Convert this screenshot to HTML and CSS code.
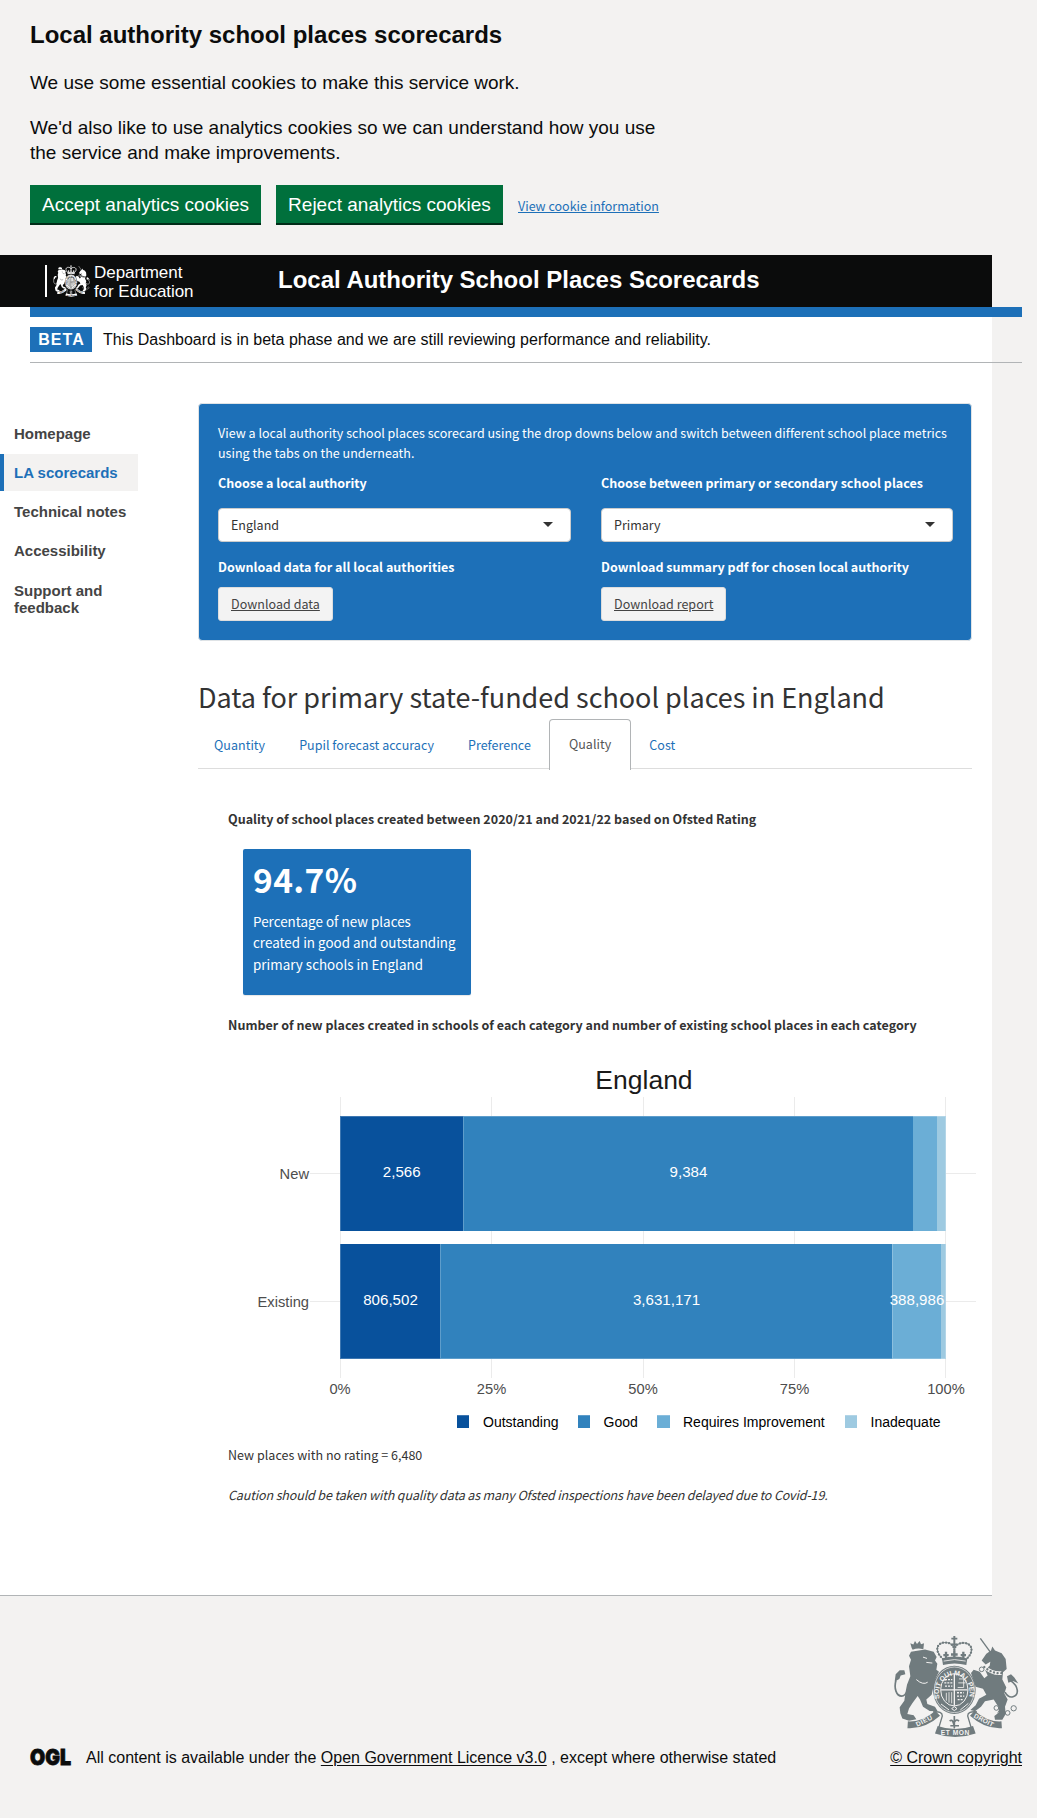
FILE: index.html
```html
<!DOCTYPE html>
<html lang="en">
<head>
<meta charset="utf-8">
<title>Local authority school places scorecards</title>
<link rel="stylesheet" href="styles.css">
</head>
<body>
<svg class="defs" aria-hidden="true">
  <defs>
    <path id="garter-arc" d="M210 238A46 55 0 1 1 298 238"/>
    <symbol id="crest" viewBox="70 45 378 312">
      <!-- lion -->
      <g fill="currentColor">
        <path d="M126 84l-4-14 9 4 5-11 6 9 8-9 4 10 9-3-2 18q-18-5-32 2z"/>
        <path d="M124 96L166 89 192 96 201 112 196 122 203 132 200 150 208 156 198 176 210 200 200 214 190 208 186 226 170 240 173 254 196 262 204 276 180 275 160 262 151 240 144 230 128 252 118 268 113 284 132 288 140 300 118 305 98 298 92 282 90 264 104 244 108 216 112 196 122 170 118 140 124 120 118 108z"/>
        <path d="M75 186l3-22 12-12h14l3 12-14 4-4 10z"/>
      </g>
      <path d="M79 182C72 206 80 230 96 230S112 210 122 198" fill="none" stroke="currentColor" stroke-width="5"/>
      <path d="M160 112l12 4M170 128l18 2M140 180q20 18 34 8" class="cut" stroke-width="3" fill="none"/>
      <!-- unicorn -->
      <path d="M332 55l30 42" stroke="currentColor" stroke-width="4"/>
      <path fill="currentColor" d="M336 122L350 102 364 92 368 80 376 92 396 100 408 118 411 148 400 158 398 180 410 204 404 222 414 240 406 262 408 284 398 302 376 302 374 290 388 280 386 262 372 240 346 246 334 262 316 276 302 272 318 258 328 238 350 226 340 208 318 202 312 184 304 160 312 150 330 156 344 176 354 168 346 150 360 138 362 126 348 134z"/>
      <path fill="currentColor" d="M416 190l-4-20 12-6 10 10 12 18-16-8z"/>
      <path d="M424 184C446 200 450 226 430 232Q416 236 406 218" fill="none" stroke="currentColor" stroke-width="5"/>
      <path d="M344 142q26 22 52 18" fill="none" class="cut" stroke-width="11"/>
      <path d="M344 142q26 22 52 18" fill="none" stroke="currentColor" stroke-width="7" stroke-linecap="round" stroke-dasharray=".1 11"/>
      <g class="links" stroke="currentColor" stroke-width="3">
        <circle cx="336" cy="149" r="7"/><circle cx="328" cy="188" r="7"/><circle cx="399" cy="201" r="6"/>
        <circle cx="380" cy="266" r="7"/><circle cx="392" cy="281" r="7"/><circle cx="414" cy="281" r="7"/><circle cx="432" cy="267" r="8"/>
      </g>
      <!-- crown -->
      <g fill="none" stroke="currentColor">
        <path d="M220 118C190 90 204 66 228 68 244 68 252 78 254 90 257 76 266 68 284 69 306 71 316 94 290 118" stroke-width="3"/>
        <path d="M220 118C190 90 204 66 228 68 244 68 252 78 254 90 257 76 266 68 284 69 306 71 316 94 290 118" stroke-width="7" stroke-linecap="round" stroke-dasharray=".1 9"/>
        <path d="M254 48v34M245 56h18M246 74h16" stroke-width="6"/>
        <path d="M229 96v24M221 106h16M254 92v26M244 104h20M281 96v24M273 106h16" stroke-width="7"/>
      </g>
      <path fill="currentColor" d="M217 116q37-12 76 0l-3 20q-36-10-70 0z"/>
      <path d="M222 124q32-9 66 0" fill="none" class="cut" stroke-width="2.5"/>
      <!-- shield and garter -->
      <ellipse cx="254" cy="211" rx="64" ry="73" fill="currentColor"/>
      <ellipse cx="254" cy="211" rx="41" ry="49" fill="none" class="cut" stroke-width="3"/>
      <ellipse cx="254" cy="211" rx="60" ry="69" fill="none" class="cut" stroke-width="2"/>
      <path d="M254 163v96M214 211h80" class="cut" stroke-width="4"/>
      <path d="M226 180h22M224 190h24M226 200h22M262 230h22M264 241h18M262 220h20" class="cut" stroke-width="4" stroke-dasharray="6 3"/>
      <path d="M268 178h14v26h-18M266 190h22M230 220v24M238 218v32M246 218v34" class="cut" stroke-width="2.5" fill="none"/>
      <path d="M214 254l24 18M296 252l-24 20M246 268l8-6 8 6-8 6z" class="cut" stroke-width="3" fill="none"/>
      <text class="motto" font-size="21"><textPath href="#garter-arc" textLength="212">SOIT QUI MAL PENSE</textPath></text>
      <!-- ribbon -->
      <g fill="none" stroke="currentColor">
        <path d="M114 317Q162 320 204 282M396 317Q350 320 308 282" stroke-width="21"/>
        <path d="M190 278q28-3 28 12l-10 34M322 278q-28-3-28 12l10 34" stroke-width="4"/>
        <path d="M200 332Q256 352 314 332" stroke-width="24"/>
        <path d="M254 290v38M240 306q8-8 12 8 6-18 16-8M242 320h26" stroke-width="5"/>
      </g>
      <g class="motto" font-size="20">
        <text x="143" y="323" transform="rotate(-27 143 323)" textLength="52">DIEU</text>
        <text x="213" y="348" textLength="86">ET MON</text>
        <text x="311" y="294" transform="rotate(28 311 294)" textLength="64">DROIT</text>
      </g>
    </symbol>
  </defs>
</svg>

<section class="cookies">
  <h2>Local authority school places scorecards</h2>
  <p>We use some essential cookies to make this service work.</p>
  <p>We'd also like to use analytics cookies so we can understand how you use the service and make improvements.</p>
  <div class="cookie-actions">
    <button class="btn-green accept">Accept analytics cookies</button>
    <button class="btn-green reject">Reject analytics cookies</button>
    <a class="cookie-link" href="#">View cookie information</a>
  </div>
</section>

<header class="header">
  <div class="brand">
    <svg class="brand-crest" viewBox="0 0 378 312" preserveAspectRatio="none"><use href="#crest" width="378" height="312"/></svg>
    <span>Department<br>for Education</span>
  </div>
  <h1>Local Authority School Places Scorecards</h1>
</header>

<main class="page">
  <div class="phase">
    <strong>BETA</strong>
    <span>This Dashboard is in beta phase and we are still reviewing performance and reliability.</span>
  </div>
  <div class="columns">
    <nav class="nav">
      <a href="#">Homepage</a>
      <a href="#" class="active">LA scorecards</a>
      <a href="#">Technical notes</a>
      <a href="#">Accessibility</a>
      <a href="#" class="support">Support and feedback</a>
    </nav>
    <div class="content">
      <section class="well">
        <p class="intro">View a local authority school places scorecard using the drop downs below and switch between different school place metrics using the tabs on the underneath.</p>
        <div class="fields">
          <div class="field">
            <label>Choose a local authority</label>
            <div class="select">England</div>
            <label class="dl-all">Download data for all local authorities</label>
            <a class="download" href="#">Download data</a>
          </div>
          <div class="field">
            <label>Choose between primary or secondary school places</label>
            <div class="select">Primary</div>
            <label>Download summary pdf for chosen local authority</label>
            <a class="download" href="#">Download report</a>
          </div>
        </div>
      </section>
      <h2 class="title">Data for primary state-funded school places in England</h2>
      <div class="tabs">
        <a href="#">Quantity</a>
        <a href="#">Pupil forecast accuracy</a>
        <a href="#">Preference</a>
        <a href="#" class="current">Quality</a>
        <a href="#">Cost</a>
      </div>
      <section class="panel">
        <h3>Quality of school places created between 2020/21 and 2021/22 based on Ofsted Rating</h3>
        <div class="value-box">
          <strong>94.7%</strong>
          <p>Percentage of new places<br>created in good and outstanding<br>primary schools in England</p>
        </div>
        <h3>Number of new places created in schools of each category and number of existing school places in each category</h3>
        <svg class="chart" width="752" height="380" viewBox="228 1060 752 380">
          <text class="chart-title" x="644" y="1089">England</text>
          <path class="grid" d="M340.5 1097V1378M491.5 1097V1378M643.5 1097V1378M794.5 1097V1378M945.5 1097V1378M310 1173.5H976M310 1301.5H976"/>
          <g shape-rendering="crispEdges">
            <path fill="#08519c" d="M340 1116h123v115H340zM340 1244h100v115H340zM457 1415h12v13h-12z"/>
            <path fill="#3182bd" d="M463 1116h450v115H463zM440 1244h452v115H440zM578 1415h12v13h-12z"/>
            <path fill="#6baed6" d="M913 1116h24v115h-24zM892 1244h49v115h-49zM657 1415h13v13h-13z"/>
            <path fill="#9ecae1" d="M937 1116h9v115h-9zM941 1244h5v115h-5zM845 1415h12v13h-12z"/>
            <path class="edge" d="M340 1116.5h606M340.5 1116v115M463.5 1116v115M945.5 1116v115M340 1358.5h606M340.5 1244v115M440.5 1244v115M892.5 1244v115M945.5 1244v115M457 1415.5h12M578 1415.5h12M657 1415.5h13M845 1415.5h12"/>
          </g>
          <g class="bar-label">
            <text x="401.7" y="1177">2,566</text><text x="688.5" y="1177">9,384</text>
            <text x="390.5" y="1305">806,502</text><text x="666.5" y="1305">3,631,171</text><text x="917" y="1305">388,986</text>
          </g>
          <g class="axis">
            <text x="340" y="1394">0%</text><text x="491.5" y="1394">25%</text><text x="643" y="1394">50%</text><text x="794.5" y="1394">75%</text><text x="946" y="1394">100%</text>
            <text class="end" x="309" y="1179">New</text><text class="end" x="309" y="1307">Existing</text>
          </g>
          <g class="legend">
            <text x="483" y="1427">Outstanding</text><text x="603.5" y="1427">Good</text><text x="683" y="1427">Requires Improvement</text><text x="870.5" y="1427">Inadequate</text>
          </g>
        </svg>
        <p class="note">New places with no rating = 6,480</p>
        <p class="caution">Caution should be taken with quality data as many Ofsted inspections have been delayed due to Covid-19.</p>
      </section>
    </div>
  </div>
</main>

<footer class="footer">
  <div class="licence">
    <svg class="ogl" width="44" height="30" viewBox="-1 0 44 30"><text x="0" y="23" textLength="41" lengthAdjust="spacingAndGlyphs">OGL</text></svg>
    <span>All content is available under the <a href="#">Open Government Licence v3.0</a> , except where otherwise stated</span>
  </div>
  <div class="copyright">
    <svg class="footer-crest" viewBox="0 0 378 312" preserveAspectRatio="none"><use href="#crest" width="378" height="312"/></svg>
    <a href="#">© Crown copyright</a>
  </div>
</footer>
</body>
</html>
```

FILE: styles.css
```css
* { box-sizing: border-box; }
body {
  margin: 0;
  background: #f3f2f1;
  color: #333;
  font: 12.5px/20px "Noto Sans CJK SC", sans-serif;
}
h1, h2, h3, p { margin: 0; }
.defs { position: absolute; width: 0; height: 0; }

.cut { stroke: var(--cut); }
.links { fill: none; }
.motto { fill: var(--cut); font-family: "Liberation Sans", sans-serif; font-weight: bold; }

.cookies {
  height: 255px;
  padding: 20px 30px 0;
  color: #0b0c0c;
  font: 19px/25px "Liberation Sans", Arial, sans-serif;
}
.cookies h2 { font-size: 24px; line-height: 30px; margin-bottom: 20px; }
.cookies p { width: 640px; margin-bottom: 20px; }
.cookie-actions { display: flex; gap: 15px; }
.btn-green {
  height: 40px;
  padding: 1px 0 0;
  border: 0;
  border-bottom: 2px solid #002d18;
  background: #00703c;
  color: #fff;
  font: 19px/37px "Liberation Sans", Arial, sans-serif;
}
.accept { width: 231px; }
.reject { width: 227px; }
.cookie-link {
  font: 12.5px/20px "Noto Sans CJK SC", sans-serif;
  color: #1d70b8;
  padding-top: 11px;
}

.header {
  display: flex;
  width: 992px;
  height: 52px;
  background: #0b0c0c;
  color: #fff;
  font-family: "Liberation Sans", Arial, sans-serif;
}
.brand {
  display: flex;
  gap: 4px;
  width: 233px;
  height: 32px;
  margin: 10px 0 0 45px;
  padding-left: 6px;
  border-left: 2px solid #fff;
  font-size: 17px;
  line-height: 19px;
}
.brand span { margin-top: -2px; letter-spacing: -.05px; }
.brand-crest { width: 37px; height: 32px; color: #fff; --cut: #0b0c0c; }
.header h1 { font-size: 24px; line-height: 30px; margin-top: 10px; letter-spacing: -.01px; }

.page {
  width: 992px;
  height: 1289px;
  background: #fff;
  border-bottom: 1px solid #b1b4b6;
}
.phase {
  display: flex;
  gap: 11px;
  width: 992px;
  height: 56px;
  margin-left: 30px;
  padding-top: 10px;
  border-top: 10px solid #1d70b8;
  border-bottom: 1px solid #b1b4b6;
  color: #0b0c0c;
  font: 16px/25px "Liberation Sans", Arial, sans-serif;
}
.phase strong {
  width: 62px;
  height: 25px;
  background: #1d70b8;
  color: #fff;
  text-align: center;
  letter-spacing: 1px;
  text-indent: 1px;
}

.columns { display: flex; gap: 60px; padding-top: 40px; }
.nav {
  display: flex;
  flex-direction: column;
  gap: 2px;
  width: 138px;
  padding-top: 12px;
  font: bold 15px/17px "Liberation Sans", Arial, sans-serif;
}
.nav a {
  min-height: 37px;
  padding: 10px;
  border-left: 4px solid transparent;
  color: #444;
  text-decoration: none;
}
.nav a.active { background: #f3f2f1; border-color: #1d70b8; color: #1d70b8; }
.nav a.support { padding-top: 11px; }

.content { width: 774px; }
.well {
  height: 238px;
  padding: 19px;
  border: 1px solid #dfe3e6;
  border-radius: 4px;
  background: #1d70b8;
  color: #fff;
}
.intro { margin-bottom: 10px; letter-spacing: .015px; }
.fields { display: grid; grid-template-columns: 353px 352px; gap: 30px; }
.field { display: flex; flex-direction: column; align-items: flex-start; }
.field label { font-weight: bold; white-space: nowrap; }
.dl-all { letter-spacing: .04px; }
.select {
  display: flex;
  justify-content: space-between;
  align-items: center;
  width: 100%;
  height: 34px;
  margin: 15px 0;
  padding: 0 17px 0 12px;
  border: 1px solid #ccc;
  border-radius: 4px;
  background: #fff;
  color: #333;
  line-height: 32px;
}
.select::after {
  content: "";
  border: 5px solid transparent;
  border-top-color: #333;
  border-bottom: 0;
  margin-top: -1px;
}
.download {
  height: 34px;
  margin-top: 10px;
  padding: 0 12px;
  border: 1px solid #ddd;
  border-radius: 3px;
  background: #f3f3f3;
  color: #444;
  line-height: 32px;
  letter-spacing: .04px;
}

.title { margin-top: 39px; font-size: 27px; font-weight: 400; line-height: 33px; white-space: nowrap; letter-spacing: -.02px; }
.tabs {
  display: flex;
  gap: 4px;
  height: 50px;
  margin-top: 6px;
  border-bottom: 1px solid #ddd;
}
.tabs a { padding: 16px 15px 0; color: #1d70b8; text-decoration: none; letter-spacing: .03px; }
.tabs a:first-child { padding-left: 16px; }
.tabs .current {
  height: 51px;
  margin-left: -1px;
  padding: 14px 19px 0;
  border: 1px solid #b1b4b6;
  border-bottom: 0;
  border-radius: 4px 4px 0 0;
  background: #fff;
  color: #555;
}
.tabs .current + a { padding-left: 14px; }

.panel { padding: 40px 0 0 30px; }
.panel h3 { font-size: 12.5px; line-height: 20px; white-space: nowrap; letter-spacing: .03px; }
.value-box {
  width: 228px;
  height: 146px;
  margin: 20px 0 20px 15px;
  padding: 11px 10px 10px;
  border-radius: 2px;
  background: #1d70b8;
  color: #fff;
  box-shadow: 0 1px 1px rgba(0, 0, 0, .1);
}
.value-box strong { display: block; font-size: 33.5px; line-height: 38px; letter-spacing: .4px; }
.value-box p { margin-top: 13px; font-size: 13.4px; line-height: 21.4px; white-space: nowrap; letter-spacing: .02px; }
.chart { display: block; margin-top: 25px; font-family: "Liberation Sans", Arial, sans-serif; }
.chart-title { font-size: 26.5px; fill: #1a1a1a; text-anchor: middle; }
.grid { stroke: #ebebeb; fill: none; }
.edge { stroke: #fff; stroke-opacity: .22; fill: none; }
.bar-label { font-size: 15.1px; fill: #fff; text-anchor: middle; }
.axis { font-size: 14.7px; fill: #4d4d4d; text-anchor: middle; }
.axis .end { text-anchor: end; }
.legend { font-size: 14px; fill: #000; }
.note { margin-top: 5px; letter-spacing: .03px; }
.caution { margin-top: 20px; font-style: italic; white-space: nowrap; letter-spacing: -.14px; }

.footer {
  display: flex;
  justify-content: space-between;
  align-items: flex-end;
  width: 1022px;
  height: 172px;
  padding-left: 29px;
  color: #0b0c0c;
  font: 16px/20px "Liberation Sans", Arial, sans-serif;
}
.footer a { color: #0b0c0c; text-underline-offset: 2px; }
.licence { display: flex; align-items: flex-end; gap: 13px; }
.ogl { display: block; margin-bottom: -4px; }
.ogl text { font: 900 22px Inter, sans-serif; fill: #0b0c0c; stroke: #0b0c0c; stroke-width: .8px; }
.copyright { display: flex; flex-direction: column; align-items: center; gap: 10px; }
.footer-crest { width: 126px; height: 103px; color: #707b7e; --cut: #f3f2f1; }
```
